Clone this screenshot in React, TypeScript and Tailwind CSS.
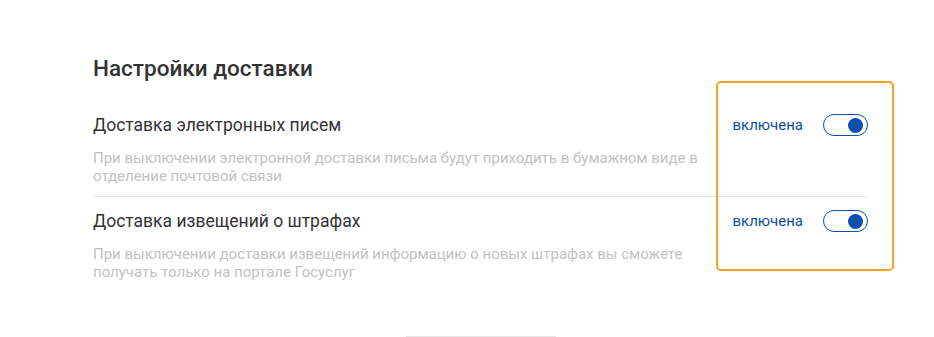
import React from "react";

function Toggle() {
  return (
    <div className="relative h-[22px] w-[45px] rounded-full border border-[#0b4fa8] bg-white">
      <div className="absolute right-[4px] top-[3px] h-[15px] w-[15px] rounded-full bg-[#0b4fa8]" />
    </div>
  );
}

function Row({ title, desc, divider }: { title: string; desc: string; divider?: boolean }) {
  return (
    <div className={divider ? "border-b border-[#e5e5e5] pb-[11px]" : ""}>
      <div className="flex items-center justify-between">
        <div className="text-[17.5px] leading-[24px] text-[#333]">{title}</div>
        <div className="flex items-center gap-[20px]">
          <span className="text-[15px] leading-[20px] text-[#0b4fa0]">включена</span>
          <Toggle />
        </div>
      </div>
      <div className="mt-[12px] max-w-[612px] text-[15px] leading-[18px] text-[#c2c2c2]">{desc}</div>
    </div>
  );
}

export default function App() {
  return (
    <div
      className="relative h-[337px] w-[934px] overflow-hidden bg-white"
      style={{ fontFamily: "Roboto, 'Liberation Sans', sans-serif" }}
    >
      <div className="pl-[93px] pt-[56px]">
        <div className="w-[775px]">
          <h2 className="text-[22.5px] font-medium leading-[24px] text-[#333]">Настройки доставки</h2>
          <div className="mt-[33px]">
            <Row
              title="Доставка электронных писем"
              desc="При выключении электронной доставки письма будут приходить в бумажном виде в отделение почтовой связи"
              divider
            />
            <div className="pt-[12px]">
              <Row
                title="Доставка извещений о штрафах"
                desc="При выключении доставки извещений информацию о новых штрафах вы сможете получать только на портале Госуслуг"
              />
            </div>
          </div>
        </div>
      </div>
      <div className="mt-[55px] flex justify-center pl-[28px]">
        <div className="h-[1px] w-[150px] bg-[#e6e6e6]" />
      </div>
      <div className="pointer-events-none absolute left-[716px] top-[81px] h-[190px] w-[178px] rounded-[5px] border-[2.5px] border-[#ff9f24]" />
    </div>
  );
}
